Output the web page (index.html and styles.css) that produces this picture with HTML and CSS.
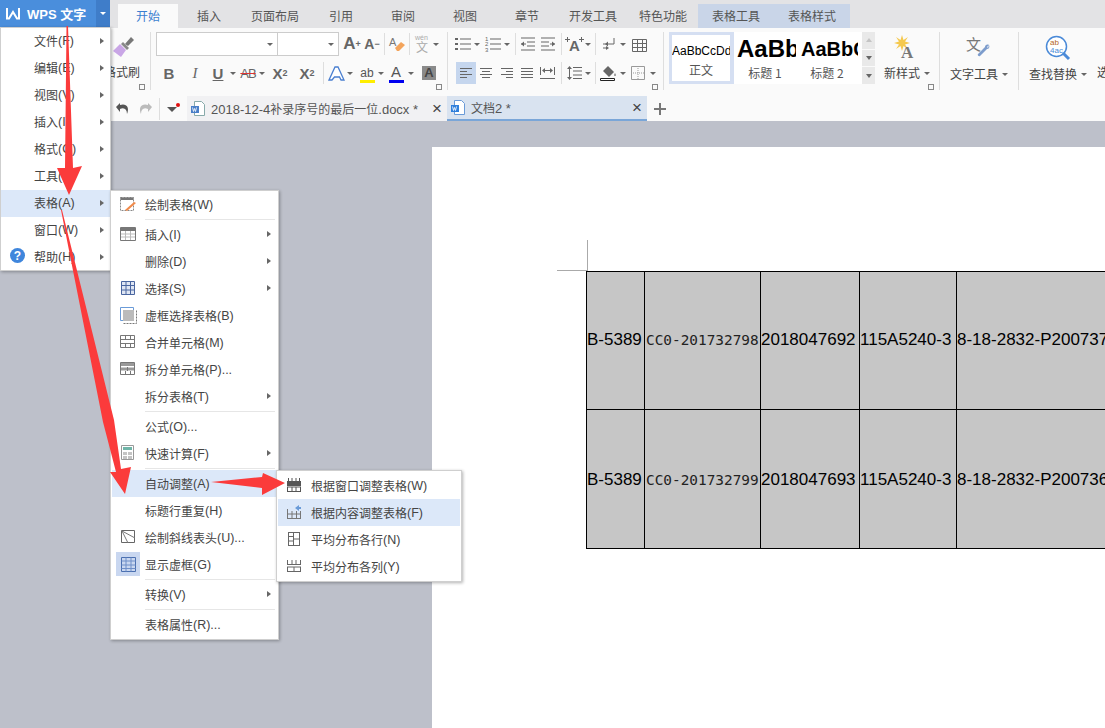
FILE: index.html
```html
<!DOCTYPE html>
<html lang="zh-CN">
<head>
    <meta charset="UTF-8">
    <meta name="viewport" content="width=device-width, initial-scale=1.0">
    <title>WPS 文字</title>
    <link rel="stylesheet" href="styles.css">
</head>
<body>
    <!-- shared table icons for the menus -->
    <svg class="defs" width="0" height="0">
        <symbol id="grid" viewBox="0 0 16 16"><path d="M.5 1.500h15v13H.5z" fill="#fff" stroke="#777"/><path d="M.5 2h15V5H.5z" fill="#777"/><path d="M1 8h14M1 11h14M5.500 5v9M10.500 5v9" stroke="#bbb" fill="none"/></symbol>
        <symbol id="merge" viewBox="0 0 16 16"><path d="M.5 1.500h14v12H.5z" fill="#fff" stroke="#777"/><path d="M1 5.500h14M1 9.500h14M5.500 2v3.500M10.500 2v3.500M5.500 10v3.500M10.500 10v3.500" stroke="#777" fill="none"/></symbol>
        <symbol id="split" viewBox="0 0 16 16"><path d="M.5 1.500h14v12H.5z" fill="#fff" stroke="#777"/><path d="M1 2h13v3H1zM1 6.500h13v3H1z" fill="#999"/><path d="M5.500 10v3.500M10.500 10v3.500M7.500 6v4" stroke="#777" fill="none"/></symbol>
    </svg>

    <header class="tabs">
        <div class="wps-btn">
            <span class="wps-name">
                <svg width="14" height="12" viewBox="0 0 14 12"><path d="M1 0v10.500h2L7 4l4 6.500h2V0" fill="none" stroke="#fff" stroke-width="2"/></svg>
                WPS 文字
            </span>
            <span class="wps-drop"><i class="dd-tri white"></i></span>
        </div>
        <span class="tab active">开始</span>
        <span class="tab">插入</span>
        <span class="tab wide">页面布局</span>
        <span class="tab">引用</span>
        <span class="tab">审阅</span>
        <span class="tab">视图</span>
        <span class="tab">章节</span>
        <span class="tab wide">开发工具</span>
        <span class="tab wide">特色功能</span>
        <span class="tab ctx">表格工具</span>
        <span class="tab ctx">表格样式</span>
    </header>

    <section class="ribbon">
        <div class="group paint">
            <svg class="brush" width="24" height="24" viewBox="0 0 24 24"><path d="M14 9l6-7 3 3-6 6z" fill="#777"/><path d="M12 7l6 6-2 2-6-6z" fill="#888"/><path d="M9 9l6 6-5 7-8-6z" fill="#c9a6e6"/></svg>
            <span class="paint-label">格式刷</span>
            <i class="launcher"></i>
        </div>

        <div class="group font">
            <div class="row">
                <span class="select sel-font"><i class="dd-tri"></i></span>
                <span class="select sel-size"><i class="dd-tri"></i></span>
                <span class="t m3 glyph bold big-a">A<sup>+</sup></span>
                <span class="t glyph bold big-a small">A<sup>−</sup></span>
                <i class="sep"></i>
                <span class="t"><svg width="17" height="17" viewBox="0 0 17 17"><text x="0" y="10" class="ico-text">A</text><path d="M6 12l6-6 4 3-6 6H8z" fill="#f3a45c"/></svg></span>
                <i class="sep"></i>
                <span class="t"><svg width="16" height="20" viewBox="0 0 16 20"><text x="1" y="6" class="wen-py">wén</text><text x="2" y="18" class="wen-zh">文</text></svg></span>
                <i class="dd"></i>
            </div>
            <div class="row">
                <span class="t m3 glyph bold">B</span>
                <span class="t m6 glyph ital">I</span>
                <span class="t m3 glyph bold under">U</span>
                <i class="dd no-pull"></i>
                <span class="t glyph strike">AB</span>
                <i class="dd"></i>
                <span class="t m3 glyph bold">X<sup>2</sup></span>
                <span class="t m7 glyph bold">X<sub>2</sub></span>
                <i class="sep m6"></i>
                <span class="t"><svg width="17" height="17" viewBox="0 0 17 17"><path d="M1 15L7 2h3l6 13h-3l-1.500-3h-5L4 15z" fill="#fff" stroke="#4a7fd0" stroke-width="1.300"/></svg></span>
                <i class="dd"></i>
                <span class="t m2 hl-tool"><span class="hl-text">ab</span><i class="bar yellow"></i></span>
                <i class="dd"></i>
                <span class="t color-a"><span>A</span><i class="bar blue"></i></span>
                <i class="dd no-pull"></i>
                <span class="t m3"><span class="grey-a">A</span></span>
            </div>
            <i class="launcher"></i>
        </div>

        <div class="group para">
            <div class="row">
                <span class="t"><svg width="16" height="14" viewBox="0 0 16 14"><path class="ln" d="M5 2h11M5 7h11M5 12h11"/><path class="dot" d="M0 1h3v2H0zM0 6h3v2H0zM0 11h3v2H0z"/></svg></span>
                <i class="dd"></i>
                <span class="t m1"><svg width="16" height="16" viewBox="0 0 16 16"><path class="ln" d="M5 3h11M5 8h11M5 13h11"/><text x="0" y="5" class="num">1</text><text x="0" y="10" class="num">2</text><text x="0" y="15.500" class="num">3</text></svg></span>
                <i class="dd"></i>
                <i class="sep m3"></i>
                <span class="t"><svg width="14" height="14" viewBox="0 0 14 14"><path class="ln" d="M0 1h14M6 5h8M6 9h8M0 13h14M0 7h5"/><path class="dot" d="M0 7l3-2.500v5z"/></svg></span>
                <span class="t"><svg width="14" height="14" viewBox="0 0 14 14"><path class="ln" d="M0 1h14M0 5h8M0 9h8M0 13h14M9 7h5"/><path class="dot" d="M14 7l-3-2.500v5z"/></svg></span>
                <i class="sep m3"></i>
                <span class="t"><svg width="19" height="16" viewBox="0 0 19 16"><text x="4" y="15" class="ico-bold">A</text><path class="dot" d="M2 1h1v2h2v1H3v2H2V4H0V3h2zM16 1h1v2h2v1h-2v2h-1V4h-2V3h2z"/></svg></span>
                <i class="dd"></i>
                <i class="sep m2"></i>
                <span class="t m1"><svg width="14" height="14" viewBox="0 0 14 14"><path class="ln" d="M12 1v6H6M1 7h3M1 11h3"/><path class="dot" d="M6 4.500L3 7l3 2.500zM4 9l3 2-3 2z"/></svg></span>
                <i class="dd pull2"></i>
                <span class="t"><svg width="15" height="15" viewBox="0 0 15 15"><path class="ln" d="M.5 2.500h14v12H.5zM.5 6.500h14M.5 10.500h14M5.500 2.500v12M10.500 2.500v12"/></svg></span>
            </div>
            <div class="row">
                <span class="t m3 on"><svg width="12" height="11" viewBox="0 0 12 11"><path class="ln" d="M0 .5h12M0 3.500h7M0 6.500h12M0 9.500h7"/></svg></span>
                <span class="t"><svg width="12" height="11" viewBox="0 0 12 11"><path class="ln" d="M0 .5h12M2 3.500h8M0 6.500h12M2 9.500h8"/></svg></span>
                <span class="t m1"><svg width="12" height="11" viewBox="0 0 12 11"><path class="ln" d="M0 .5h12M5 3.500h7M0 6.500h12M5 9.500h7"/></svg></span>
                <span class="t"><svg width="12" height="11" viewBox="0 0 12 11"><path class="ln" d="M0 .5h12M0 3.500h12M0 6.500h12M0 9.500h12"/></svg></span>
                <span class="t"><svg width="15" height="12" viewBox="0 0 15 12"><path class="ln" d="M.5 0v8M14.500 0v8M0 11.500h15M3 3.500h9"/><path class="dot" d="M2 3.500L5 1v5zM13 3.500L10 1v5z"/></svg></span>
                <i class="sep m4"></i>
                <span class="t"><svg width="15" height="14" viewBox="0 0 15 14"><path class="ln" d="M6 1.500h9M6 5h9M6 9h9M6 12.500h9M2.500 2v10"/><path class="dot" d="M2.500 0L5 3H0zM2.500 14L0 11h5z"/></svg></span>
                <i class="dd"></i>
                <i class="sep m2"></i>
                <span class="t"><svg width="16" height="16" viewBox="0 0 16 16"><path d="M3 6l5-5 6 6-5 5z" fill="#666"/><path d="M15 8c1 2 1 3 0 3-1 0-1-1 0-3z" fill="#666"/><path d="M.5 13.500h14v2H.5z" fill="#fff" stroke="#222"/></svg></span>
                <i class="dd no-pull"></i>
                <span class="t"><svg width="14" height="14" viewBox="0 0 14 14"><path d="M.5.500h13v13H.5z" fill="none" stroke="#999"/><path d="M7 2v11M2 7h11" stroke="#999" stroke-dasharray="1 1"/></svg></span>
                <i class="dd no-pull"></i>
            </div>
            <i class="launcher"></i>
        </div>

        <div class="gallery">
            <div class="style-cell current">
                <span class="sample s-normal">AaBbCcDd</span>
                <span class="cap">正文</span>
            </div>
            <div class="style-cell">
                <span class="sample s-h1">AaBb</span>
                <span class="cap">标题 1</span>
            </div>
            <div class="style-cell last">
                <span class="sample s-h2">AaBbC</span>
                <span class="cap">标题 2</span>
            </div>
            <div class="gal-scroll">
                <span><i class="tri-up"></i></span>
                <span><i class="tri-down"></i></span>
                <span class="more"><i class="tri-down"></i></span>
            </div>
        </div>

        <div class="group bigtool new-style">
            <svg width="26" height="24" viewBox="0 0 26 24"><path d="M8 0l1.500 5 4.500-3-3 4.500 5 1.500-5 1.500 3 4.500-4.500-3L8 16l-1.500-5L2 14l3-4.500L0 8l5-1.500L2 2l4.500 3z" fill="#f5c94e"/><text x="7" y="23" class="ico-serif">A</text></svg>
            <span class="lbl">新样式<i class="dd-tri"></i></span>
            <i class="launcher"></i>
        </div>
        <div class="group bigtool text-tool">
            <svg width="26" height="26" viewBox="0 0 26 26"><text x="0" y="15" class="ico-cjk">文</text><path d="M23 10c1 2 0 4-2 4l-7 7c-1 1-3-1-2-2l7-7c0-2 2-3 4-2l-2 2 1 1z" fill="#7d9ccc"/></svg>
            <span class="lbl">文字工具<i class="dd-tri"></i></span>
        </div>
        <div class="group bigtool find-tool">
            <svg width="26" height="26" viewBox="0 0 26 26"><circle cx="11.500" cy="11.500" r="10" fill="#fff" stroke="#4a8ad8" stroke-width="1.500"/><path d="M18 18l6 6" stroke="#4a8ad8" stroke-width="3"/><text x="5" y="10" class="ab-o">ab</text><text x="5" y="18" class="ab-b">4ac</text></svg>
            <span class="lbl">查找替换<i class="dd-tri"></i></span>
        </div>
        <span class="cut-label">选择</span>
    </section>

    <nav class="docbar">
        <span class="t"><svg width="14" height="14" viewBox="0 0 14 14"><path d="M4 3c6-2 10 2 7 9 0-5-3-7-7-5v3L0 5l4-4z" fill="#555"/></svg></span>
        <span class="t m2"><svg width="14" height="14" viewBox="0 0 14 14"><path d="M10 3C4 1 0 5 3 12c0-5 3-7 7-5v3l4-5-4-4z" fill="#bbb"/></svg></span>
        <i class="sep tall"></i>
        <span class="quick"><i class="quick-tri"></i><i class="quick-dot"></i></span>
        <div class="doc-tab one">
            <svg width="14" height="15" viewBox="0 0 14 15"><path d="M3.500.500h7l3 3v11h-10z" fill="#fff" stroke="#8aa"/><path d="M0 5h8v7H0z" fill="#4a7fc8"/><path d="M1.500 6.500l1 4 1-3 1 3 1-4" stroke="#fff" fill="none" stroke-width=".8"/></svg>
            <span class="doc-name">2018-12-4<span class="zh">补录序号的最后一位</span>.docx *</span>
            <span class="doc-close">×</span>
        </div>
        <div class="doc-tab two">
            <svg width="14" height="15" viewBox="0 0 14 15"><path d="M3.500.500h7l3 3v11h-10z" fill="#fff" stroke="#6a9bd8"/><path d="M0 5h8v7H0z" fill="#2f7fdc"/><path d="M1.500 6.500l1 4 1-3 1 3 1-4" stroke="#fff" fill="none" stroke-width=".8"/></svg>
            <span class="doc-name"><span class="zh">文档</span>2 *</span>
            <span class="doc-close">×</span>
        </div>
        <span class="plus"></span>
    </nav>

    <main class="workspace">
        <div class="page">
            <i class="crop crop-v"></i>
            <i class="crop crop-h"></i>
            <table class="doc-table">
                <colgroup>
                    <col class="c1"><col class="c2"><col class="c3"><col class="c4"><col class="c5">
                </colgroup>
                <tr class="r1">
                    <td>B-5389</td>
                    <td class="mono">CC0-201732798</td>
                    <td>2018047692</td>
                    <td>115A5240-3</td>
                    <td>8-18-2832-P200737</td>
                </tr>
                <tr class="r2">
                    <td>B-5389</td>
                    <td class="mono">CC0-201732799</td>
                    <td>2018047693</td>
                    <td>115A5240-3</td>
                    <td>8-18-2832-P200736</td>
                </tr>
            </table>
        </div>
    </main>

    <!-- WPS main menu -->
    <div class="menu main-menu">
        <div class="item">文件<span class="k">(F)</span><i class="arr"></i></div>
        <div class="item">编辑<span class="k">(E)</span><i class="arr"></i></div>
        <div class="item">视图<span class="k">(V)</span><i class="arr"></i></div>
        <div class="item">插入<span class="k">(I)</span><i class="arr"></i></div>
        <div class="item">格式<span class="k">(O)</span><i class="arr"></i></div>
        <div class="item">工具<span class="k">(T)</span><i class="arr"></i></div>
        <div class="item hover">表格<span class="k">(A)</span><i class="arr"></i></div>
        <div class="item">窗口<span class="k">(W)</span><i class="arr"></i></div>
        <div class="item"><span class="ic help">?</span>帮助<span class="k">(H)</span><i class="arr"></i></div>
    </div>

    <!-- 表格 submenu -->
    <div class="menu table-menu">
        <div class="item"><span class="ic"><svg width="16" height="16" viewBox="0 0 16 16"><path d="M.5 1.500h13v13H.5z" fill="#fff" stroke="#888" stroke-dasharray="2 1"/><path d="M.5 1.500h13V4H.5z" fill="#777"/><path d="M5 14l9-8 2 1-9 8z" fill="#f08a4b"/></svg></span>绘制表格<span class="k">(W)</span></div>
        <hr>
        <div class="item"><span class="ic"><svg width="16" height="16"><use href="#grid"/></svg></span>插入<span class="k">(I)</span><i class="arr"></i></div>
        <div class="item">删除<span class="k">(D)</span><i class="arr"></i></div>
        <div class="item"><span class="ic"><svg width="14" height="14" viewBox="0 0 14 14"><path d="M.5.500h13v13H.5z" fill="#dfe6f3" stroke="#4a66a0"/><path d="M.5 4.500h13M.5 9h13M5 .5v13M9.500.5v13" stroke="#4a66a0"/></svg></span>选择<span class="k">(S)</span><i class="arr"></i></div>
        <div class="item"><span class="ic"><svg width="17" height="17" viewBox="0 0 17 17"><path d="M.5.500h13v13H.5z" fill="none" stroke="#6a9bd8"/><path d="M3 3h11v11H3z" fill="#bbb"/><path d="M3.500 16.500h13v-13" fill="none" stroke="#777" stroke-dasharray="2 1"/></svg></span>虚框选择表格<span class="k">(B)</span></div>
        <div class="item"><span class="ic"><svg width="16" height="16"><use href="#merge"/></svg></span>合并单元格<span class="k">(M)</span></div>
        <div class="item"><span class="ic"><svg width="16" height="16"><use href="#split"/></svg></span>拆分单元格<span class="k">(P)...</span></div>
        <div class="item">拆分表格<span class="k">(T)</span><i class="arr"></i></div>
        <hr>
        <div class="item">公式<span class="k">(O)...</span></div>
        <div class="item"><span class="ic"><svg width="14" height="16" viewBox="0 0 14 16"><path d="M.5.500h12v14H.5z" fill="#fff" stroke="#999"/><path d="M2 2h9v3H2z" fill="#6fb5a8"/><path d="M2 7h4v3H2zM7 7h4v3H7zM2 11h4v3H2zM7 11h4v3H7z" fill="#c4c4c4"/></svg></span>快速计算<span class="k">(F)</span><i class="arr"></i></div>
        <hr>
        <div class="item hover">自动调整<span class="k">(A)</span></div>
        <div class="item">标题行重复<span class="k">(H)</span></div>
        <div class="item"><span class="ic"><svg width="15" height="14" viewBox="0 0 15 14"><path d="M.5.500h13v12H.5z" fill="#fff" stroke="#666"/><path d="M1 1l13 7M1 1l6 12" stroke="#777" fill="none"/></svg></span>绘制斜线表头<span class="k">(U)...</span></div>
        <div class="item"><span class="ic shown"><svg width="15" height="15" viewBox="0 0 15 15"><path d="M.5.500h14v14H.5z" fill="none" stroke="#4a6fb0"/><path d="M.5 4h14M.5 8h14M.5 11.500h14M5 .5v14M10 .5v14" stroke="#6f8fc8"/></svg></span>显示虚框<span class="k">(G)</span></div>
        <hr>
        <div class="item">转换<span class="k">(V)</span><i class="arr"></i></div>
        <hr>
        <div class="item">表格属性<span class="k">(R)...</span></div>
    </div>

    <!-- 自动调整 submenu -->
    <div class="menu fit-menu">
        <div class="item"><span class="ic"><svg width="14" height="14" viewBox="0 0 14 14"><path d="M1.500 0v3M5 0v3M9 0v3M12.500 0v3M0 3.500h14M0 9h14M.5 9v5M5 9v5M9 9v5M13.500 9v5M0 13.500h14" stroke="#555" fill="none"/><path d="M0 4h14v4H0z" fill="#555"/></svg></span>根据窗口调整表格<span class="k">(W)</span></div>
        <div class="item hover"><span class="ic"><svg width="14" height="14" viewBox="0 0 14 14"><path d="M.5 4v10M5 6v8M9.500 6v8M13.500 6v8M0 9h14M0 13.500h14" stroke="#777" fill="none"/><path d="M8 3l4-3v2h2v2h-2v2z" fill="#6a9bd8"/></svg></span>根据内容调整表格<span class="k">(F)</span></div>
        <div class="item"><span class="ic"><svg width="12" height="14" viewBox="0 0 12 14"><path d="M.5 0v14M11.500 0v14M5.500 0v14M0 .5h5M0 4.500h5M0 9h5M0 13.500h5M6 .5h5M6 7h5M6 13.500h5" stroke="#666" fill="none"/></svg></span>平均分布各行<span class="k">(N)</span></div>
        <div class="item"><span class="ic"><svg width="14" height="12" viewBox="0 0 14 12"><path d="M.5 0v4M5 0v4M9 0v4M13.500 0v4M0 4.500h14M0 7h14M0 11.500h14M.5 7v5M7 7v5M13.500 7v5" stroke="#666" fill="none"/></svg></span>平均分布各列<span class="k">(Y)</span></div>
    </div>

    <!-- red annotation arrows drawn on top of the screenshot -->
    <svg class="arrows" width="1105" height="728" viewBox="0 0 1105 728">
        <path d="M66.500 26L68 26 73 168 82 166 69 195 57 168 65 168z" fill="#fb3b3b"/>
        <path d="M61 210L62 210 114 420 121 469 131 467 125 494 110 472 116 472 103 422z" fill="#fb3b3b"/>
        <path d="M211 482L262 477 263 473 285 483 262 495 262 488z" fill="#fb3b3b"/>
    </svg>
</body>
</html>
```

FILE: styles.css
```css
* {
    box-sizing: border-box;
}
body {
    position: relative;
    display: flex;
    flex-direction: column;
    width: 1105px;
    height: 728px;
    margin: 0;
    overflow: hidden;
    font-family: "Noto Sans CJK SC", "Liberation Sans", sans-serif;
    font-size: 12px;
    color: #444;
    background: #bdc0ca;
}
i {
    display: block;
}
.defs {
    position: absolute;
}

/* title tabs */
.tabs {
    display: flex;
    align-items: flex-end;
    flex: none;
    height: 28px;
    background: #e3e3e5;
}
.wps-btn {
    display: flex;
    flex: none;
    align-self: flex-start;
    width: 118px;
    height: 27px;
    padding-right: 8px;
    color: #fff;
    font-family: "Liberation Sans", "Noto Sans CJK SC", sans-serif;
    font-size: 13px;
    font-weight: bold;
}
.wps-name {
    display: flex;
    align-items: center;
    gap: 7px;
    width: 96px;
    padding-left: 6px;
    background: #4a8edc;
    white-space: nowrap;
}
.wps-drop {
    display: flex;
    align-items: center;
    justify-content: center;
    width: 14px;
    background: #3f7dc9;
}
.tab {
    flex: none;
    width: 62px;
    height: 24px;
    line-height: 24px;
    text-align: center;
    color: #555;
    white-space: nowrap;
}
.tab.wide {
    width: 70px;
}
.tab.active {
    width: 60px;
    background: #fafafa;
    color: #3a7fd0;
}
.tab.ctx {
    width: 76px;
    background: #c9d5e8;
}

/* ribbon */
.ribbon {
    display: flex;
    flex: none;
    height: 68px;
    overflow: hidden;
    background: #fafafa;
}
.group {
    position: relative;
    flex: none;
    height: 58px;
    margin-top: 4px;
    border-right: 1px solid #dedede;
}
.paint {
    width: 151px;
}
.brush {
    position: absolute;
    left: 111px;
    top: 3px;
}
.paint-label {
    position: absolute;
    left: 104px;
    top: 31px;
    white-space: nowrap;
}
.font {
    width: 297px;
    padding-left: 5px;
}
.para {
    width: 216px;
    padding-left: 5px;
}
.row {
    display: flex;
    align-items: center;
    height: 24px;
    margin-bottom: 5px;
}
.launcher {
    position: absolute;
    right: 5px;
    bottom: 0;
    width: 6px;
    height: 6px;
    border: 1px solid #888;
    border-width: 1px 0 0 1px;
    box-shadow: inset -2px -2px 0 -1px #888;
}
.select {
    display: flex;
    flex: none;
    align-items: center;
    justify-content: flex-end;
    height: 24px;
    padding-right: 4px;
    border: 1px solid #ccc;
    background: #fff;
}
.sel-font {
    width: 122px;
}
.sel-size {
    width: 61px;
    border-left: 0;
}
.t {
    display: flex;
    align-items: center;
    justify-content: center;
    flex: none;
    position: relative;
    width: 20px;
    height: 22px;
}
.t svg {
    overflow: visible;
}
.t.on {
    background: #c5d6ee;
}
.dd {
    flex: none;
    width: 10px;
    height: 10px;
    margin-left: -1px;
    position: relative;
}
.dd::after,
.dd-tri {
    content: "";
    display: inline-block;
    width: 0;
    height: 0;
    border: 3px solid transparent;
    border-top: 3px solid #666;
    border-bottom: 0;
}
.dd::after {
    position: absolute;
    left: 2px;
    top: 4px;
}
.dd-tri.white {
    border-top-color: #fff;
}
.dd.no-pull {
    margin-left: 0;
}
.dd.pull2 {
    margin-left: -1px;
    margin-right: 1px;
}
.sep {
    flex: none;
    width: 1px;
    height: 22px;
    margin: 0 2px;
    background: #dedede;
}
.sep.tall {
    height: 22px;
    margin: 0 3px 0 4px;
}
.m1 { margin-left: 1px; }
.m2 { margin-left: 2px; }
.m3 { margin-left: 3px; }
.m4 { margin-left: 4px; }
.m6 { margin-left: 6px; }
.m7 { margin-left: 7px; }

.glyph {
    font-family: "Liberation Sans", sans-serif;
    font-size: 15px;
    color: #666;
}
.glyph sup,
.glyph sub {
    font-size: 9px;
    line-height: 0;
}
.bold {
    font-weight: bold;
}
.ital {
    font-family: "Liberation Serif", serif;
    font-style: italic;
}
.under {
    text-decoration: underline;
}
.strike {
    font-size: 13px;
    letter-spacing: -1px;
    text-decoration: line-through;
    text-decoration-color: #d33;
}
.big-a {
    font-size: 17px;
}
.big-a.small {
    font-size: 14px;
}
.hl-text {
    font-family: "Liberation Sans", sans-serif;
    font-size: 12px;
    color: #555;
    line-height: 12px;
}
.bar {
    position: absolute;
    left: 3px;
    bottom: 1px;
    width: 15px;
    height: 3px;
}
.yellow {
    background: #ffee00;
}
.blue {
    background: #0000f0;
}
.color-a span {
    margin-top: -4px;
    font: 15px "Liberation Sans", sans-serif;
    color: #555;
}
.grey-a {
    display: block;
    width: 14px;
    height: 14px;
    background: #8a8a8a;
    color: #444;
    font: bold 13px/14px "Liberation Sans", sans-serif;
    text-align: center;
}

/* small svg icon pieces */
.ln {
    stroke: #666;
    stroke-width: 1;
    fill: none;
}
.dot {
    fill: #666;
}
.num {
    font: 6px "Liberation Sans", sans-serif;
    fill: #666;
}
.wen-py {
    font: 7px "Liberation Sans", sans-serif;
    fill: #aaa;
}
.wen-zh {
    font: 12px "Noto Sans CJK SC", sans-serif;
    fill: #aaa;
}
.ico-text {
    font: 11px "Liberation Sans", sans-serif;
    fill: #777;
}
.ico-bold {
    font: bold 15px "Liberation Sans", sans-serif;
    fill: #666;
}
.ico-serif {
    font: bold 17px "Liberation Serif", serif;
    fill: #777;
}
.ico-cjk {
    font: 15px "Noto Sans CJK SC", sans-serif;
    fill: #777;
}
.ab-o {
    font: 8px "Liberation Sans", sans-serif;
    fill: #b5651d;
}
.ab-b {
    font: 8px "Liberation Sans", sans-serif;
    fill: #4a8ad8;
}

/* style gallery */
.gallery {
    display: flex;
    flex: none;
    width: 206px;
    height: 52px;
    margin: 4px 0 0 5px;
    background: #f0f0f0;
}
.style-cell {
    display: flex;
    flex: none;
    flex-direction: column;
    justify-content: space-between;
    width: 62px;
    height: 52px;
    padding: 3px 0 3px;
    overflow: hidden;
    background: #fff;
    text-align: center;
    white-space: nowrap;
}
.style-cell.current {
    width: 65px;
    border: 3px solid #d5dff2;
    border-right-width: 4px;
}
.style-cell.last {
    width: 66px;
    padding-right: 4px;
}
.sample {
    display: block;
    height: 28px;
    overflow: hidden;
    color: #000;
    font-family: "Liberation Sans", sans-serif;
    line-height: 28px;
}
.s-normal {
    font-size: 12px;
    height: 24px;
    line-height: 26px;
}
.s-h1 {
    font-size: 24px;
    font-weight: bold;
    text-align: left;
    padding-left: 3px;
}
.s-h2 {
    font-size: 20px;
    font-weight: bold;
    text-align: left;
    padding-left: 5px;
}
.cap {
    color: #555;
    line-height: 16px;
}
.gal-scroll {
    display: flex;
    flex: none;
    flex-direction: column;
    width: 13px;
    background: #e9e9e9;
}
.gal-scroll span {
    display: flex;
    flex: 1;
    align-items: center;
    justify-content: center;
    border-bottom: 1px solid #fafafa;
}
.gal-scroll .more {
    border-bottom: 0;
}
.tri-up,
.tri-down {
    width: 0;
    height: 0;
    border: 3px solid transparent;
    border-bottom: 4px solid #c4c4c4;
    border-top: 0;
}
.tri-down {
    border-top: 4px solid #666;
    border-bottom: 0;
}

/* big buttons at the right of the ribbon */
.bigtool {
    display: flex;
    flex-direction: column;
    align-items: center;
    padding-top: 3px;
}
.bigtool svg {
    flex: none;
}
.lbl {
    display: flex;
    align-items: center;
    gap: 4px;
    margin-top: 5px;
    line-height: 16px;
    white-space: nowrap;
}
.new-style {
    width: 65px;
}
.new-style .lbl {
    margin-top: 6px;
}
.text-tool {
    width: 79px;
}
.find-tool {
    width: 78px;
    border-right: 0;
}
.cut-label {
    flex: none;
    margin-top: 36px;
    line-height: 16px;
}

/* document tabs */
.docbar {
    display: flex;
    align-items: center;
    flex: none;
    height: 25px;
    padding-left: 113px;
    background: #fafafa;
}
.quick {
    position: relative;
    flex: none;
    width: 20px;
    height: 20px;
}
.quick-tri {
    position: absolute;
    left: 4px;
    top: 8px;
    border: 5px solid transparent;
    border-top: 5px solid #555;
    border-bottom: 0;
}
.quick-dot {
    position: absolute;
    left: 13px;
    top: 4px;
    width: 4px;
    height: 4px;
    border-radius: 50%;
    background: #e01010;
}
.doc-tab {
    display: flex;
    align-items: center;
    flex: none;
    height: 25px;
    padding-left: 4px;
    white-space: nowrap;
    color: #555;
}
.doc-tab svg {
    flex: none;
    margin-right: 6px;
}
.doc-name {
    flex: 1;
    font-family: "Liberation Sans", sans-serif;
    font-size: 13px;
}
.zh {
    font-family: "Noto Sans CJK SC", sans-serif;
    font-size: 12px;
}
.doc-close {
    width: 20px;
    font: 17px "Liberation Sans", sans-serif;
    text-align: center;
    color: #444;
}
.doc-tab.one {
    width: 260px;
    margin-left: 4px;
    background: #f1f1f3;
}
.doc-tab.two {
    width: 200px;
    background: #d9e3f0;
    border-bottom: 2px solid #7aa6d8;
}
.plus {
    position: relative;
    width: 12px;
    height: 12px;
    margin-left: 7px;
    background: linear-gradient(#777, #777) center / 100% 2px no-repeat, linear-gradient(#777, #777) center / 2px 100% no-repeat;
}

/* document area */
.workspace {
    display: flex;
    flex: 1;
    min-height: 0;
    padding: 26px 0 0 432px;
}
.page {
    position: relative;
    flex: 1;
    min-width: 0;
    padding: 124px 0 0 154px;
    overflow: hidden;
    background: #fff;
}
.crop {
    position: absolute;
    background: #aaa;
}
.crop-v {
    left: 155px;
    top: 93px;
    width: 1px;
    height: 30px;
}
.crop-h {
    left: 125px;
    top: 123px;
    width: 31px;
    height: 1px;
}
.doc-table {
    width: 570px;
    table-layout: fixed;
    border-collapse: collapse;
    font-family: "Liberation Sans", sans-serif;
    font-size: 17px;
    color: #000;
}
.doc-table td {
    padding: 0;
    overflow: hidden;
    white-space: nowrap;
    background: #c6c6c6;
    border: 1px solid #000;
}
.doc-table .mono {
    padding-left: 1px;
    font-family: "DejaVu Sans Mono", monospace;
    font-size: 14.4px;
    color: #222;
}
.c1 { width: 58px; }
.c2 { width: 116px; }
.c3 { width: 99px; }
.c4 { width: 97px; }
.c5 { width: 200px; }
.r1 { height: 138px; }
.r1 td { padding-bottom: 2px; }
.r2 { height: 139px; }
.r2 td { padding-top: 1px; }

/* dropdown menus */
.menu {
    position: absolute;
    padding: 0 1px;
    background: #fff;
    border: 1px solid #cfcfcf;
    box-shadow: 1px 1px 3px rgba(0, 0, 0, .3);
}
.main-menu {
    left: 0;
    top: 27px;
    width: 111px;
    height: 244px;
    padding: 0;
}
.table-menu {
    left: 110px;
    top: 190px;
    width: 169px;
    height: 450px;
}
.fit-menu {
    left: 276px;
    top: 470px;
    width: 186px;
    height: 112px;
    padding-top: 1px;
}
.item {
    position: relative;
    display: flex;
    align-items: center;
    height: 27px;
    padding-left: 33px;
    white-space: nowrap;
}
.main-menu .item {
    padding-bottom: 2px;
}
.item.hover {
    background: #dce8f9;
}
.k {
    font-family: "Liberation Sans", sans-serif;
    font-size: 12.5px;
}
.ic {
    position: absolute;
    left: 4px;
    top: 1px;
    display: flex;
    align-items: center;
    justify-content: center;
    width: 24px;
    height: 24px;
}
.ic.shown {
    background: #c9d7f0;
}
.ic.help {
    left: 9px;
    top: 4px;
    width: 15px;
    height: 15px;
    border-radius: 50%;
    background: #3f86dc;
    color: #fff;
    font: bold 12px "Liberation Sans", sans-serif;
}
.arr {
    position: absolute;
    right: 6px;
    top: 10px;
    border: 3px solid transparent;
    border-left: 4px solid #666;
    border-right: 0;
}
.menu hr {
    height: 1px;
    margin: 1px 2px 1px 33px;
    border: 0;
    background: #e6e6e6;
}

.arrows {
    position: absolute;
    left: 0;
    top: 0;
    pointer-events: none;
}
```
